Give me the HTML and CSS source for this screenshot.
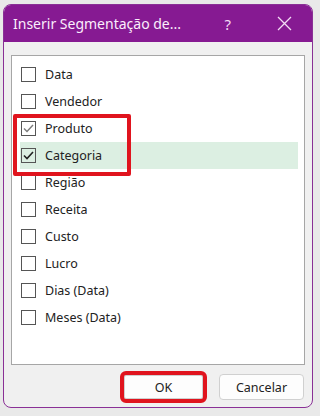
FILE: index.html
```html
<!DOCTYPE html>
<html lang="pt-BR">
<head>
  <meta charset="UTF-8" />
  <meta name="viewport" content="width=device-width, initial-scale=1.0" />
  <title>Inserir Segmentação de Dados</title>
  <link rel="stylesheet" href="styles.css">
</head>
<body>
  <div class="dialog">
    <div class="titlebar">
      <span class="title">Inserir Segmentação de...</span>
      <span class="help">?</span>
      <svg class="close" width="15" height="15" viewBox="0 0 15 15">
        <path d="M1 1 L14 14 M14 1 L1 14" stroke="#f3dcf5" stroke-width="1.3" fill="none" />
      </svg>
    </div>
    <div class="content">
      <div class="list">
        <div class="row"><span class="box"></span>Data</div>
        <div class="row"><span class="box"></span>Vendedor</div>
        <div class="marked">
          <div class="row"><span class="box"><svg width="13" height="13" viewBox="0 0 13 13"><path d="M2 6.5 L5 9.5 L11 3" stroke="#7a7a7a" stroke-width="1.4" fill="none" /></svg></span>Produto</div>
          <div class="row selected"><span class="box"><svg width="13" height="13" viewBox="0 0 13 13"><path d="M2 6.5 L5 9.5 L11 3" stroke="#222" stroke-width="1.6" fill="none" /></svg></span>Categoria</div>
        </div>
        <div class="row"><span class="box"></span>Região</div>
        <div class="row"><span class="box"></span>Receita</div>
        <div class="row"><span class="box"></span>Custo</div>
        <div class="row"><span class="box"></span>Lucro</div>
        <div class="row"><span class="box"></span>Dias (Data)</div>
        <div class="row"><span class="box"></span>Meses (Data)</div>
      </div>
      <div class="footer">
        <button class="btn btn-ok">OK</button>
        <button class="btn">Cancelar</button>
      </div>
    </div>
  </div>
</body>
</html>
```

FILE: styles.css
```css
body {
  margin: 0;
  background-color: #e9e9e9;
  font-family: "Noto Sans", "Open Sans", sans-serif;
}
.dialog {
  width: 308px;
  height: 402px;
  margin: 4px 0 0 3px;
  background-color: #f0f0f0;
  border: 1px solid #8a3096;
  border-radius: 8px;
  overflow: hidden;
  display: flex;
  flex-direction: column;
}
.titlebar {
  height: 37px;
  background-color: #861a92;
  color: #fbeefc;
  display: flex;
  align-items: center;
  padding-left: 9px;
}
.title {
  flex: 1;
  font-size: 14px;
  white-space: nowrap;
}
.help {
  font-size: 15px;
  margin-right: 46px;
  color: #f3dcf5;
}
.close {
  margin-right: 20px;
}
.content {
  flex: 1;
  padding: 13px 7px 0 7px;
  display: flex;
  flex-direction: column;
}
.list {
  height: 303px;
  background-color: #fff;
  border: 1px solid #a6a6a6;
  padding-top: 5px;
}
.row {
  height: 27px;
  display: flex;
  align-items: center;
  padding-left: 9px;
  font-size: 12.5px;
  color: #222;
}
.box {
  width: 13px;
  height: 13px;
  border: 1px solid #555;
  margin-right: 9px;
  display: flex;
  align-items: center;
  justify-content: center;
}
.selected {
  background-color: #dcefe2;
  margin-left: 8px;
  margin-right: 6px;
  padding-left: 1px;
}
.marked {
  position: relative;
}
.marked::after {
  content: "";
  position: absolute;
  left: 1px;
  top: -1px;
  width: 110px;
  height: 54px;
  border: 4px solid #e0141e;
  border-radius: 2px;
}
.footer {
  display: flex;
  justify-content: flex-end;
  gap: 16px;
  padding-top: 9px;
  padding-right: 1px;
}
.btn {
  height: 26px;
  width: 85px;
  background-color: #fdfdfd;
  border: 1px solid #d0d0d0;
  border-radius: 4px;
  font-family: "Noto Sans", "Open Sans", sans-serif;
  font-size: 12.5px;
  color: #222;
  padding: 0;
}
.btn-ok {
  width: 79px;
  height: 24px;
  margin-top: 1px;
  outline: 4px solid #e0141e;
  border-radius: 2px;
}
```
